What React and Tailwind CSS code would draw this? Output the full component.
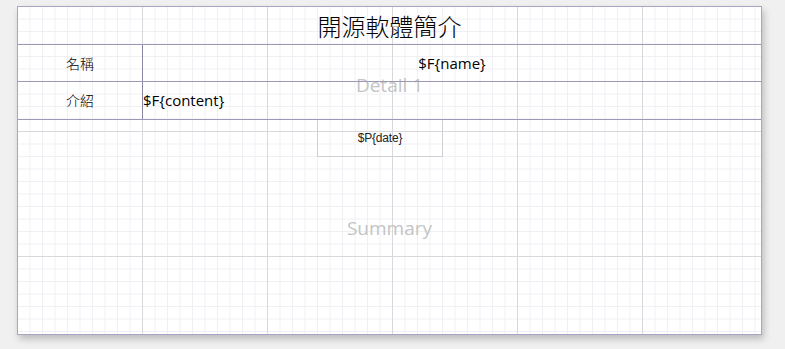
import React from 'react';

const cjk = "font-['Noto_Sans_CJK_TC','Noto_Sans',sans-serif]";
const latin = "font-['Open_Sans','Noto_Sans',sans-serif]";

function ReportCanvas() {
  return (
    <div className="relative w-[745px] h-[329px] bg-white border border-[#a8a5c6] shadow-[2px_4px_7px_rgba(0,0,0,0.22)] bg-[linear-gradient(to_right,#d8d8dc_1px,transparent_1px),linear-gradient(to_bottom,#d8d8dc_1px,transparent_1px),linear-gradient(to_right,#f0f0f4_1px,transparent_1px),linear-gradient(to_bottom,#f0f0f4_1px,transparent_1px)] bg-[size:125px_125px,125px_125px,12.5px_12.5px,12.5px_12.5px] bg-[position:-1px_-1px]">
      {/* band labels, drawn under the band lines */}
      <div className={`absolute left-0 right-0 top-[64px] flex justify-center text-[19px] text-[#c4c4c4] ${latin}`}>
        Detail 1
      </div>
      <div className={`absolute left-0 right-0 top-[207px] flex justify-center text-[19px] text-[#c4c4c4] ${latin}`}>
        Summary
      </div>

      <div className="relative flex flex-col">
        {/* Title */}
        <div className="h-[38px] flex items-center justify-center border-b border-[#9c98b6]">
          <span className={`text-[24px] leading-none font-light text-black ${cjk}`}>開源軟體簡介</span>
        </div>

        {/* Detail rows */}
        <div className="h-[37px] flex border-b border-[#9c98b6]">
          <div className={`w-[125px] flex items-center justify-center border-r border-[#8a87a4] text-[14px] font-light ${cjk}`}>名稱</div>
          <div className={`flex-1 flex items-center justify-center text-[15px] ${latin}`}>$F&#123;name&#125;</div>
        </div>
        <div className="h-[38px] flex border-b border-[#9c98b6]">
          <div className={`w-[125px] flex items-center justify-center border-r border-[#8a87a4] text-[14px] font-light ${cjk}`}>介紹</div>
          <div className={`flex-1 flex items-center text-[15px] ${latin}`}>$F&#123;content&#125;</div>
        </div>

        {/* Summary */}
        <div className="flex">
          <div className="ml-[299px] w-[126px] h-[37px] flex items-center justify-center border-x border-b border-[#cfcfd4] font-['Liberation_Sans',Arial,sans-serif] text-[12px] tracking-[-0.2px] text-[#222]">
            $P&#123;date&#125;
          </div>
        </div>
      </div>
    </div>
  );
}

export default function App() {
  return (
    <div className="w-[785px] h-[349px] bg-[#f0f0f0] pl-[17px] pt-[6px]">
      <ReportCanvas />
    </div>
  );
}
